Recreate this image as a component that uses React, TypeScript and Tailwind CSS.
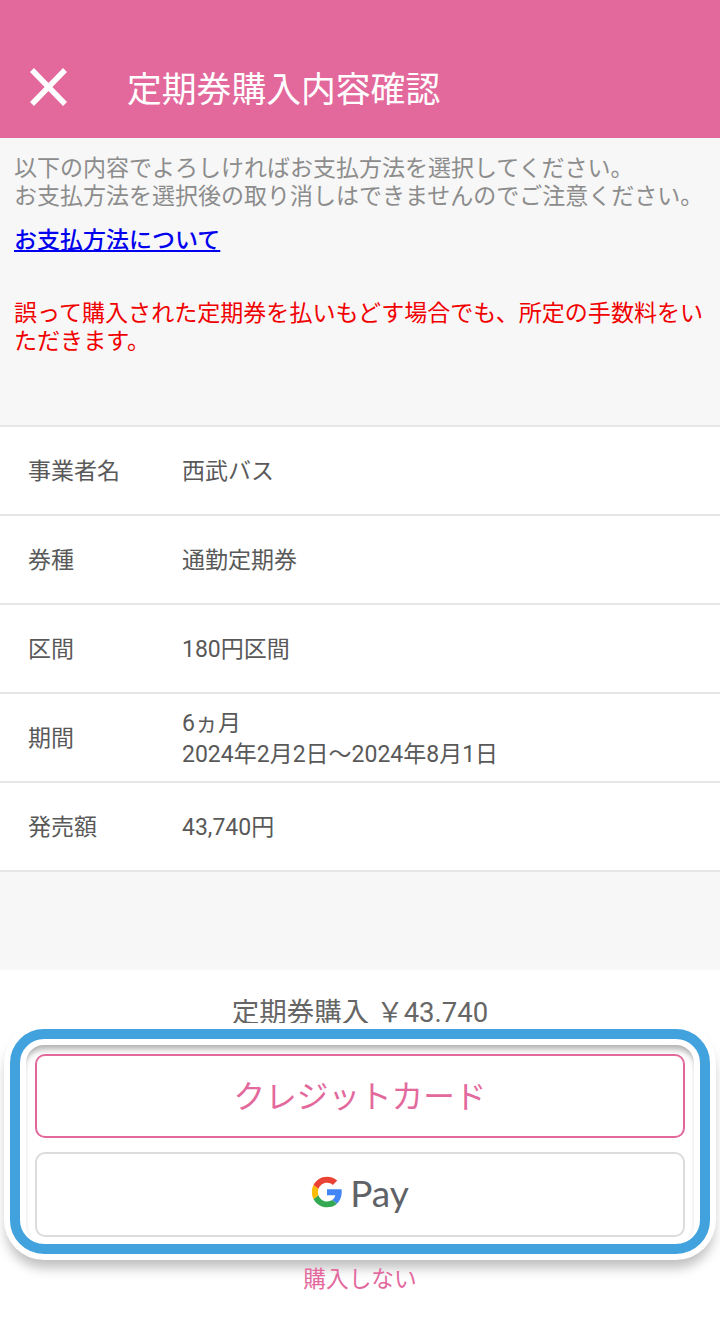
const FONT = "font-['Roboto','Noto_Sans_CJK_JP',sans-serif]";

const rows = [
  { label: "事業者名", value: ["西武バス"] },
  { label: "券種", value: ["通勤定期券"] },
  { label: "区間", value: ["180円区間"] },
  { label: "期間", value: ["6ヵ月", "2024年2月2日～2024年8月1日"] },
  { label: "発売額", value: ["43,740円"] },
];

function GoogleG() {
  return (
    <svg width="32" height="32" viewBox="0 0 48 48">
      <path fill="#4285F4" d="M46.1 24.5c0-1.6-.1-3.1-.4-4.5H24v9h12.4c-.5 2.9-2.2 5.300-4.600 7l7.200 5.600c4.200-3.900 7.100-9.700 7.100-17.100z" />
      <path fill="#34A853" d="M24 47c6.200 0 11.400-2 15-5.400L31.800 36c-2 1.400-4.600 2.200-7.800 2.200-6 0-11-4-12.800-9.500l-7.500 5.800C7.500 42 15.200 47 24 47z" />
      <path fill="#FBBC05" d="M11.200 28.700c-.5-1.400-.7-3-.7-4.700s.3-3.300.7-4.700l-7.500-5.800C2.200 16.600 1.300 20.200 1.300 24s.9 7.400 2.400 10.500l7.500-5.800z" />
      <path fill="#EA4335" d="M24 10c3.400 0 6.400 1.200 8.800 3.400l6.500-6.500C35.400 3.300 30.200 1 24 1 15.200 1 7.500 6 3.700 13.500l7.500 5.800C13 13.900 18 10 24 10z" />
    </svg>
  );
}

export default function App() {
  return (
    <div className={`${FONT} w-[720px] h-[1320px] bg-white flex flex-col overflow-hidden`}>
      <header className="h-[138px] shrink-0 bg-[#e3699d] flex items-end pb-[28px]">
        <svg className="ml-[28px] mb-[3px]" width="42" height="40" viewBox="0 0 42 40">
          <path d="M4 3 L37 37 M37 3 L4 37" stroke="#fff" strokeWidth="5.500" fill="none" />
        </svg>
        <h1 className="ml-[57px] text-[34.8px] leading-[40px] text-white">定期券購入内容確認</h1>
      </header>

      <main className="bg-[#f7f7f7] h-[832px] shrink-0 flex flex-col">
        <div className="pl-[14px] pt-[17px] h-[287px] shrink-0 text-[23px] leading-[28px]">
          <p className="text-[#8c8c8c] whitespace-nowrap">
            以下の内容でよろしければお支払方法を選択してください。
            <br />
            お支払方法を選択後の取り消しはできませんのでご注意ください。
          </p>
          <a href="#" className="block mt-[16px] text-[#0000ee] underline font-medium">お支払方法について</a>
          <p className="mt-[45px] text-[#f00000] w-[696px] text-[23.05px]">誤って購入された定期券を払いもどす場合でも、所定の手数料をいただきます。</p>
        </div>

        <div className="bg-white border-t-2 border-[#e6e6e6]">
          {rows.map((row) => (
            <div key={row.label} className="h-[89px] pt-[2px] border-b-2 border-[#e6e6e6] flex items-center text-[23px] leading-[31px] text-[#595959]">
              <div className="w-[182px] pl-[28px] shrink-0">{row.label}</div>
              <div>
                {row.value.map((line) => (
                  <div key={line}>{line}</div>
                ))}
              </div>
            </div>
          ))}
        </div>
      </main>

      <footer className="flex-1 bg-white flex flex-col items-center">
        <p className="mt-[26px] h-[33px] text-[27.5px] leading-[33px] text-[#666666]">定期券購入 ￥43.740</p>
        <div className="mt-[-6px] w-[712px] rounded-[40px] bg-white p-[6px] shadow-[0_10px_12px_-2px_rgba(0,0,0,0.25)]">
          <div className="rounded-[34px] border-[10px] border-[#42a2dd] bg-white p-[6px] pb-0">
            <div className="rounded-[18px] px-[9px] pt-[9px] pb-[7px] flex flex-col gap-[14px] shadow-[inset_0_8px_6px_-4px_rgba(0,0,0,0.32),inset_-5px_0_5px_-5px_rgba(0,0,0,0.07),inset_5px_0_5px_-5px_rgba(0,0,0,0.07)]">
              <button className="h-[84px] pt-[3px] rounded-[10px] border-2 border-[#e3699d] bg-white text-[31.6px] text-[#e3699d]">クレジットカード</button>
              <button className="h-[85px] pb-[5px] rounded-[10px] border-2 border-[#dcdcdc] bg-white flex items-center justify-center gap-[7px]">
                <GoogleG />
                <span className="font-['Lato',sans-serif] text-[37px] leading-none text-[#5f6368]">Pay</span>
              </button>
            </div>
          </div>
        </div>
        <a href="#" className="mt-[5px] text-[22.7px] leading-[30px] text-[#e3699d]">購入しない</a>
      </footer>
    </div>
  );
}
